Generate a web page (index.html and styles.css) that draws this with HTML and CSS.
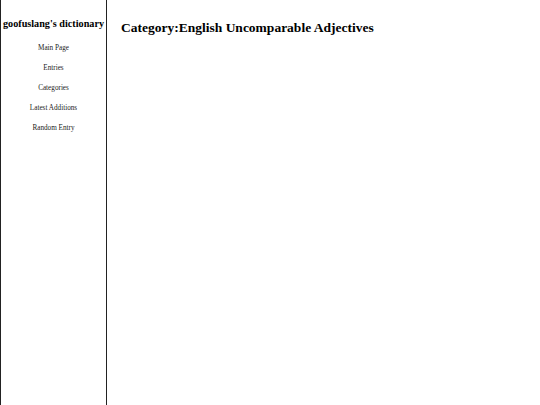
FILE: index.html
```html
<!DOCTYPE html>
<html lang="en">
<head>
  <meta charset="UTF-8" />
  <meta name="viewport" content="width=device-width, initial-scale=1" />
  <title>Category:English Uncomparable Adjectives - goofuslang's dictionary</title>
  <link rel="stylesheet" href="styles.css">
</head>
<body>
  <aside class="sidebar">
    <h2 class="site-title">goofuslang's dictionary</h2>
    <nav class="side-nav">
      <a href="index.html">Main Page</a>
      <a href="entries.html">Entries</a>
      <a href="categories.html">Categories</a>
      <a href="latest.html">Latest Additions</a>
      <a href="random.html">Random Entry</a>
    </nav>
  </aside>
  <main class="content">
    <h1>Category:English Uncomparable Adjectives</h1>
  </main>
</body>
</html>
```

FILE: styles.css
```css
html, body {
  height: 100%;
}
body {
  font-family: "Liberation Serif", "Times New Roman", serif;
  margin: 0;
  padding: 0;
  background: #fff;
  color: #000;
  display: flex;
}
.sidebar {
  width: 105px;
  flex-shrink: 0;
  border-left: 1px solid #222;
  border-right: 1px solid #222;
  text-align: center;
}
.site-title {
  font-size: 10.2px;
  line-height: 12px;
  white-space: nowrap;
  margin: 18px 0 0;
}
.side-nav {
  display: flex;
  flex-direction: column;
  gap: 10px;
  padding-top: 13px;
  font-size: 7.2px;
}
.side-nav a {
  color: #222;
  text-decoration: none;
  line-height: 10px;
}
.content {
  padding: 0 14px;
}
.content h1 {
  font-size: 13.5px;
  line-height: 16px;
  margin: 20px 0;
}
```
